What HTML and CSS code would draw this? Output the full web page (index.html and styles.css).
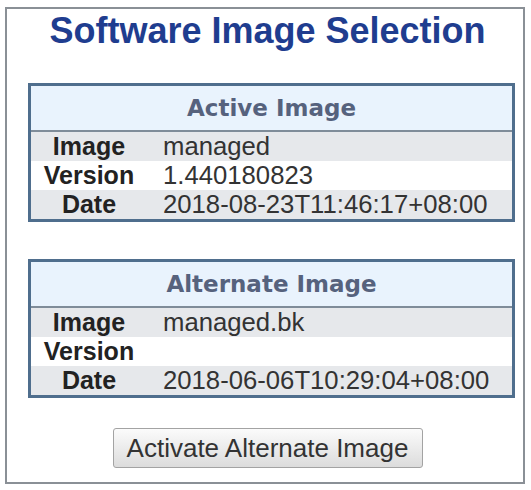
FILE: index.html
```html
<!DOCTYPE html>
<html>
<head>
<meta charset="utf-8">
<link rel="stylesheet" href="styles.css">
</head>
<body>
<div class="frame">
  <h1 class="title">Software Image Selection</h1>
  <table class="info first">
    <tr><th class="head" colspan="2">Active Image</th></tr>
    <tr class="odd"><td class="lbl">Image</td><td class="val">managed</td></tr>
    <tr class="even"><td class="lbl">Version</td><td class="val">1.440180823</td></tr>
    <tr class="odd"><td class="lbl">Date</td><td class="val">2018-08-23T11:46:17+08:00</td></tr>
  </table>
  <table class="info second">
    <tr><th class="head" colspan="2">Alternate Image</th></tr>
    <tr class="odd"><td class="lbl">Image</td><td class="val">managed.bk</td></tr>
    <tr class="even"><td class="lbl">Version</td><td class="val"></td></tr>
    <tr class="odd"><td class="lbl">Date</td><td class="val">2018-06-06T10:29:04+08:00</td></tr>
  </table>
  <div class="actions">
    <button class="btn" type="button">Activate Alternate Image</button>
  </div>
</div>
</body>
</html>
```
FILE: styles.css
```css
html, body {
  margin: 0;
  padding: 0;
  background: #ffffff;
}
.frame {
  box-sizing: border-box;
  width: 520px;
  height: 477px;
  margin: 7px 0 0 5px;
  padding: 2px 0 0 5px;
  border: 2px solid #8a9096;
  background: #ffffff;
}
.title {
  margin: 0;
  font-family: "Liberation Sans", Arial, sans-serif;
  font-weight: bold;
  font-size: 36px;
  line-height: 40px;
  color: #1f3d8f;
  text-align: center;
}
.info {
  width: 487px;
  margin-left: 16px;
  border-collapse: separate;
  border-spacing: 0;
  border: 3px solid #4f6e8d;
}
.info.first {
  margin-top: 32px;
}
.info.second {
  margin-top: 37px;
}
.head {
  height: 44px;
  padding: 0;
  background: #e9f3fd;
  border-bottom: 2px solid #7f8c99;
  font-family: "DejaVu Sans", Verdana, sans-serif;
  font-weight: bold;
  font-size: 23px;
  color: #56627d;
  text-align: center;
}
.info td {
  height: 29px;
  padding: 0;
  line-height: 29px;
  font-family: "Liberation Sans", Arial, sans-serif;
  font-size: 25.7px;
  white-space: nowrap;
}
.odd td {
  background: #e6e8eb;
}
.even td {
  background: #ffffff;
}
.lbl {
  width: 116px;
  text-align: center;
  font-weight: bold;
  font-size: 25px !important;
  color: #222222;
}
.val {
  padding-left: 16px !important;
  color: #333333;
}
.actions {
  margin-top: 30px;
  text-align: center;
}
.btn {
  width: 310px;
  height: 40px;
  padding: 0;
  border: 1px solid #a3a3a3;
  border-radius: 3px;
  background: linear-gradient(#fbfbfb, #dcdcdc);
  font-family: "Liberation Sans", Arial, sans-serif;
  font-size: 26px;
  color: #333333;
}
```
